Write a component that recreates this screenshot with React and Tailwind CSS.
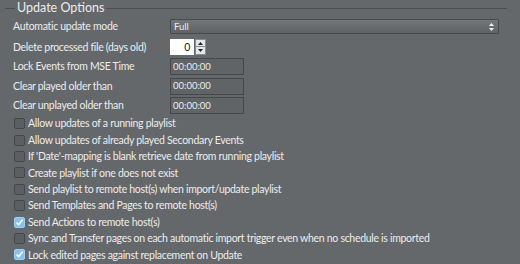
import React from "react";

const fields = [
  { label: "Lock Events from MSE Time", value: "00:00:00" },
  { label: "Clear played older than", value: "00:00:00" },
  { label: "Clear unplayed older than", value: "00:00:00" },
];

const options = [
  { label: "Allow updates of a running playlist", checked: false },
  { label: "Allow updates of already played Secondary Events", checked: false },
  { label: "If 'Date'-mapping is blank retrieve date from running playlist", checked: false },
  { label: "Create playlist if one does not exist", checked: false },
  { label: "Send playlist to remote host(s) when import/update playlist", checked: false },
  { label: "Send Templates and Pages to remote host(s)", checked: false },
  { label: "Send Actions to remote host(s)", checked: true },
  { label: "Sync and Transfer pages on each automatic import trigger even when no schedule is imported", checked: false },
  { label: "Lock edited pages against replacement on Update", checked: true },
];

const Check = ({ checked }) =>
  checked ? (
    <div className="w-[11px] h-[11px] shrink-0 rounded-[2px] bg-[#86c2ec] border border-[#9fd0f2] flex items-center justify-center">
      <svg width="9" height="9" viewBox="0 0 9 9">
        <path d="M1.5 4.5 L3.6 6.6 L7.6 1.8" stroke="#ffffff" strokeWidth="1.6" fill="none" />
      </svg>
    </div>
  ) : (
    <div className="w-[11px] h-[11px] shrink-0 rounded-[2px] bg-[#5c5f62] border border-[#45484a]" />
  );

export default function App() {
  return (
    <div
      className="w-[520px] h-[264px] bg-[#65686b] text-[#ececec] text-[10.5px] tracking-[-0.3px] leading-none overflow-hidden whitespace-nowrap"
      style={{ fontFamily: "Lato, 'Noto Sans', sans-serif" }}
    >
      {/* Legend */}
      <div className="flex items-center h-[14px] mt-[1px] tracking-normal">
        <div className="w-[10px] ml-[5px] h-px bg-[#4b4d50]" />
        <span className="px-[2px] text-[12.5px]">Update Options</span>
        <div className="flex-1 mr-[13px] h-px bg-[#4b4d50]" />
      </div>

      <div className="pl-[13px] pr-[21px] mt-[4px]">
        {/* Automatic update mode */}
        <div className="flex items-center h-[15px]">
          <span className="w-[157px]">Automatic update mode</span>
          <div className="flex-1 h-[15px] flex items-center justify-between border border-[#47494c] bg-gradient-to-b from-[#74777a] to-[#606366] rounded-[1px] pl-[3px] pr-[4px]">
            <span className="text-[9.5px] tracking-normal">Full</span>
            <svg width="5" height="8" viewBox="0 0 5 8">
              <path d="M2.5 0 L5 3 L0 3 Z M2.5 8 L5 5 L0 5 Z" fill="#f2f2f2" />
            </svg>
          </div>
        </div>

        {/* Spin box */}
        <div className="flex items-center h-[16px] mt-[5px]">
          <span className="w-[157px]">Delete processed file (days old)</span>
          <div className="flex items-center">
            <div className="w-[24px] h-[16px] bg-white text-[#222] flex items-center justify-end pr-[4px] text-[10.5px]">0</div>
            <div className="flex flex-col ml-px">
              <div className="w-[11px] h-[8px] bg-[#e6e6e6] border border-[#8a8a8a] flex items-center justify-center">
                <svg width="5" height="3" viewBox="0 0 5 3"><path d="M2.5 0 L5 3 L0 3 Z" fill="#222" /></svg>
              </div>
              <div className="w-[11px] h-[8px] bg-[#e6e6e6] border border-[#8a8a8a] border-t-0 flex items-center justify-center">
                <svg width="5" height="3" viewBox="0 0 5 3"><path d="M0 0 L5 0 L2.5 3 Z" fill="#222" /></svg>
              </div>
            </div>
          </div>
        </div>

        {/* Time fields */}
        <div className="flex flex-col gap-[2.5px] mt-[3px]">
          {fields.map((f) => (
            <div key={f.label} className="flex items-center h-[17px]">
              <span className="w-[157px]">{f.label}</span>
              <div className="w-[74px] h-[17px] border border-[#45484a] bg-[#616467] flex items-center pl-[2px] text-[9.5px] tracking-normal">
                {f.value}
              </div>
            </div>
          ))}
        </div>

        {/* Checkboxes */}
        <div className="flex flex-col ml-px mt-[1.5px]">
          {options.map((o) => (
            <div key={o.label} className="flex items-center h-[16.4px] gap-[3px]">
              <Check checked={o.checked} />
              <span>{o.label}</span>
            </div>
          ))}
        </div>
      </div>
    </div>
  );
}
